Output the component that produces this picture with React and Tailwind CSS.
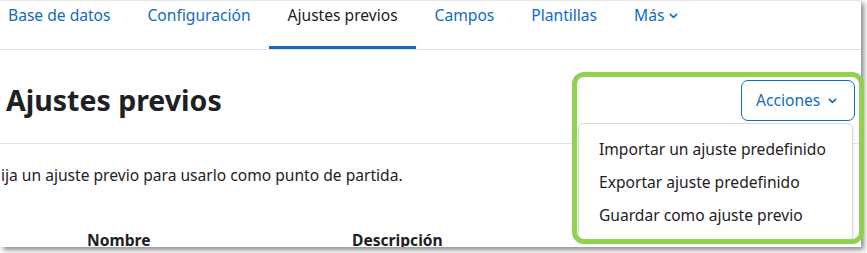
import React from "react";

const Chevron = ({className = ""}) => (
    <svg viewBox="0 0 10 6" className={className} fill="none" stroke="currentColor" strokeWidth="1.8"
         strokeLinecap="round" strokeLinejoin="round">
        <path d="M1.5 1.2 5 4.6 8.5 1.2"/>
    </svg>
);

const tabs = [
    {label: "Base de datos"},
    {label: "Configuración"},
    {label: "Ajustes previos", active: true},
    {label: "Campos"},
    {label: "Plantillas"},
    {label: "Más", menu: true},
];

const menuItems = [
    "Importar un ajuste predefinido",
    "Exportar ajuste predefinido",
    "Guardar como ajuste previo",
];

const App = () => {
    return (
        <div className="w-[867px] h-[253px] bg-white relative overflow-hidden"
             style={{fontFamily: '"Noto Sans", "Open Sans", sans-serif'}}>
            <div
                className="relative w-[861px] h-[247px] bg-white overflow-hidden border-t border-[#e6e6e6] shadow-[3px_3px_5px_rgba(0,0,0,0.45)]">
                {/* secondary navigation */}
                <div className="flex h-[49px] border-b border-[#dee2e6] ml-[-10.5px]">
                    {tabs.map(tab => (
                        <div key={tab.label}
                             className={`flex items-start pt-[3px] px-[18.5px] text-[15.6px] leading-[22px] ${tab.active ? "text-[#1d2125] border-b-[3px] border-[#0f6cbf]" : "text-[#0f6cbf]"}`}>
                            {tab.label}
                            {tab.menu && <Chevron className="w-[9px] h-[6px] ml-[5px] mt-[9px]"/>}
                        </div>
                    ))}
                </div>

                {/* heading row */}
                <div className="flex items-center justify-between pl-[6px] pr-[6px] mt-[30px]">
                    <h2 className="text-[28.5px] font-bold text-[#1d2125] leading-none">Ajustes previos</h2>
                    <button
                        className="flex items-center h-[41px] w-[114px] pl-[14px] border border-[#0f6cbf] rounded-[7px] text-[15.6px] text-[#0f6cbf]">
                        Acciones
                        <Chevron className="w-[9px] h-[6px] ml-[8px] mt-[1px]"/>
                    </button>
                </div>

                <div className="mt-[22px] border-t border-[#dee2e6]"/>

                <p className="mt-[20px] pl-[1px] text-[15.6px] leading-[22px] text-[#1d2125]">
                    ija un ajuste previo para usarlo como punto de partida.
                </p>

                <div className="flex mt-[43px] text-[15.6px] font-bold text-[#1d2125] leading-[22px]">
                    <div className="pl-[87px] w-[352px]">Nombre</div>
                    <div>Descripción</div>
                </div>

                {/* open actions menu */}
                <div
                    className="absolute left-[578px] top-[122px] w-[275px] h-[118px] bg-white border border-[#d9d9d9] rounded-[6px] shadow-[0_2px_4px_rgba(0,0,0,0.12)] pt-[9px]">
                    {menuItems.map(item => (
                        <div key={item}
                             className="h-[33px] flex items-center pl-[20px] text-[15.6px] text-[#1d2125]">
                            {item}
                        </div>
                    ))}
                </div>
            </div>

            {/* annotation highlight */}
            <div
                className="absolute left-[572px] top-[72px] w-[292px] h-[172px] border-[5px] border-[#92d050] rounded-[12px] pointer-events-none"/>
        </div>
    );
};

export default App;
